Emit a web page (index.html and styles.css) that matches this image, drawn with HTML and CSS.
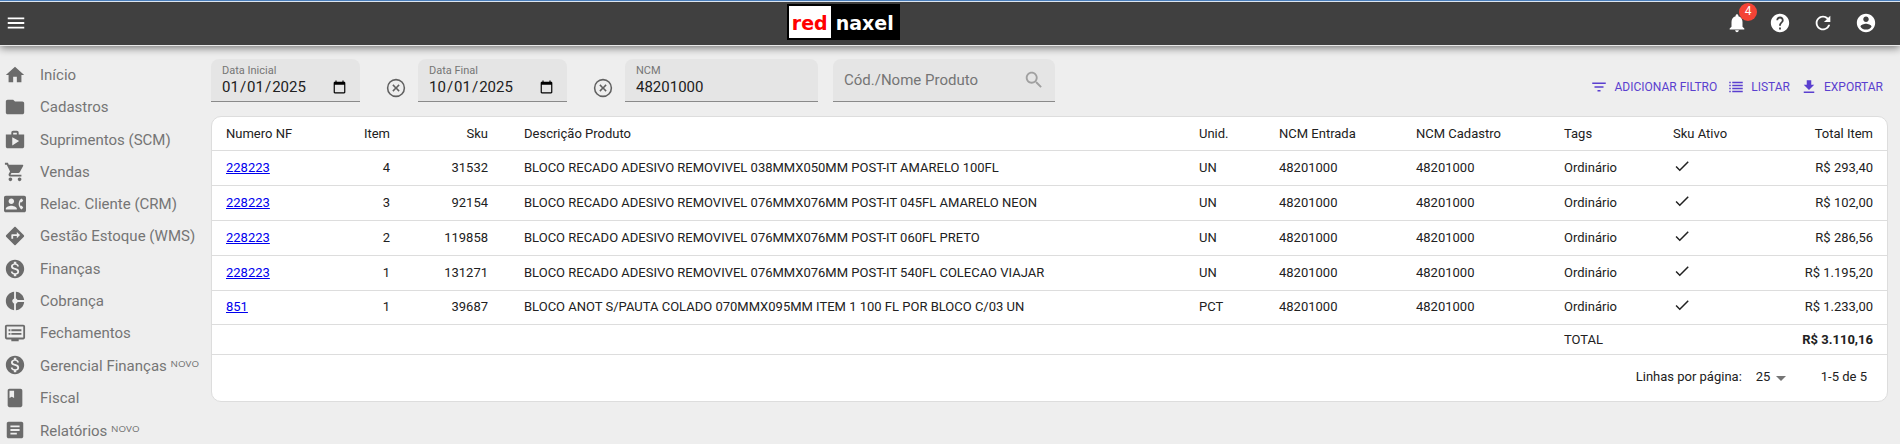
FILE: index.html
```html
<!DOCTYPE html>
<html lang="pt-BR">
<head>
<meta charset="utf-8">
<title>Rednaxel</title>
<link rel="stylesheet" href="styles.css">
</head>
<body>
<header class="topbar">
  <button class="icon-btn" aria-label="Menu"><svg viewBox="0 0 24 24"><path d="M3 18h18v-2H3v2zm0-5h18v-2H3v2zm0-7v2h18V6H3z"/></svg></button>
  <a class="logo" href="#"><span class="logo-red">red</span><span class="logo-naxel">naxel</span></a>
  <div class="top-actions">
    <button class="icon-btn" aria-label="Notificações"><svg viewBox="0 0 24 24"><path d="M12 22c1.100 0 2-.9 2-2h-4c0 1.100.89 2 2 2zm6-6v-5c0-3.070-1.640-5.640-4.500-6.320V4c0-.83-.67-1.500-1.500-1.500s-1.500.67-1.500 1.500v.68C7.630 5.360 6 7.920 6 11v5l-2 2v1h16v-1l-2-2z"/></svg><span class="badge">4</span></button>
    <button class="icon-btn" aria-label="Ajuda"><svg viewBox="0 0 24 24"><path d="M12 2C6.480 2 2 6.480 2 12s4.480 10 10 10 10-4.480 10-10S17.520 2 12 2zm1 17h-2v-2h2v2zm2.070-7.750l-.9.920C13.450 12.900 13 13.500 13 15h-2v-.5c0-1.100.45-2.100 1.170-2.830l1.240-1.260c.37-.36.59-.86.59-1.410 0-1.100-.9-2-2-2s-2 .9-2 2H8c0-2.210 1.790-4 4-4s4 1.790 4 4c0 .88-.36 1.680-.93 2.250z"/></svg></button>
    <button class="icon-btn" aria-label="Atualizar"><svg viewBox="0 0 24 24"><path d="M17.650 6.350C16.200 4.900 14.210 4 12 4c-4.420 0-7.990 3.580-7.990 8s3.570 8 7.990 8c3.730 0 6.840-2.550 7.730-6h-2.080c-.82 2.330-3.040 4-5.650 4-3.310 0-6-2.690-6-6s2.690-6 6-6c1.660 0 3.140.69 4.220 1.780L13 11h7V4l-2.350 2.350z"/></svg></button>
    <button class="icon-btn" aria-label="Conta"><svg viewBox="0 0 24 24"><path d="M12 2C6.480 2 2 6.480 2 12s4.480 10 10 10 10-4.480 10-10S17.520 2 12 2zm0 3c1.660 0 3 1.340 3 3s-1.340 3-3 3-3-1.340-3-3 1.340-3 3-3zm0 14.200c-2.500 0-4.710-1.280-6-3.220.03-1.990 4-3.080 6-3.080 1.990 0 5.970 1.090 6 3.080-1.290 1.940-3.500 3.220-6 3.220z"/></svg></button>
  </div>
</header>
<div class="layout">
  <nav class="sidebar">
    <a href="#"><svg viewBox="0 0 24 24"><path d="M10 20v-6h4v6h5v-8h3L12 3 2 12h3v8z"/></svg>Início</a>
    <a href="#"><svg viewBox="0 0 24 24"><path d="M10 4H4c-1.100 0-1.990.9-1.990 2L2 18c0 1.100.9 2 2 2h16c1.100 0 2-.9 2-2V8c0-1.100-.9-2-2-2h-8l-2-2z"/></svg>Cadastros</a>
    <a href="#"><svg viewBox="0 0 24 24"><path d="M16 6V4c0-1.110-.89-2-2-2h-4c-1.110 0-2 .89-2 2v2H2v13c0 1.110.89 2 2 2h16c1.110 0 2-.89 2-2V6h-6zm-6-2h4v2h-4V4zM9 18V9l7.500 4L9 18z"/></svg>Suprimentos (SCM)</a>
    <a href="#"><svg viewBox="0 0 24 24"><path d="M7 18c-1.100 0-1.990.9-1.990 2S5.900 22 7 22s2-.9 2-2-.9-2-2-2zM1 2v2h2l3.600 7.590-1.350 2.450c-.16.28-.25.61-.25.96 0 1.100.9 2 2 2h12v-2H7.420c-.14 0-.25-.11-.25-.25l.03-.12.9-1.630h7.450c.75 0 1.410-.41 1.750-1.030l3.580-6.490c.08-.14.12-.31.12-.48 0-.55-.45-1-1-1H5.210l-.94-2H1zm16 16c-1.100 0-1.990.9-1.990 2s.89 2 1.990 2 2-.9 2-2-.9-2-2-2z"/></svg>Vendas</a>
    <a href="#"><svg viewBox="0 0 24 24"><path d="M22 3H2C.9 3 0 3.900 0 5v14c0 1.100.9 2 2 2h20c1.100 0 1.990-.9 1.990-2L24 5c0-1.100-.9-2-2-2zM8 6c1.660 0 3 1.340 3 3s-1.340 3-3 3-3-1.340-3-3 1.340-3 3-3zm6 12H2v-1c0-2 4-3.100 6-3.100s6 1.100 6 3.100v1zm3.850-4h1.640L21 16l-1.990 1.990c-1.310-.98-2.280-2.380-2.730-3.990-.18-.64-.28-1.310-.28-2s.1-1.360.28-2c.45-1.620 1.420-3.010 2.730-3.990L21 8l-1.510 2h-1.640c-.22.63-.35 1.300-.35 2s.13 1.370.35 2z"/></svg>Relac. Cliente (CRM)</a>
    <a href="#"><svg viewBox="0 0 24 24"><path d="M21.710 11.290l-9-9c-.39-.39-1.020-.39-1.410 0l-9 9c-.39.39-.39 1.020 0 1.410l9 9c.39.39 1.020.39 1.410 0l9-9c.39-.38.39-1.010 0-1.410zM14 14.500V12h-4v3H8v-4c0-.55.45-1 1-1h5V7.500l3.500 3.500-3.500 3.500z"/></svg>Gestão Estoque (WMS)</a>
    <a href="#"><svg viewBox="0 0 24 24"><use href="#coin"/></svg>Finanças</a>
    <a href="#"><svg viewBox="0 0 24 24"><path d="M11 9.160V2c-5 .5-9 4.790-9 10s4 9.500 9 10v-7.160c-1-.41-2-1.520-2-2.840s1-2.430 2-2.840zM14.860 11H22c-.48-4.750-4-8.530-9-9v7.160c1 .3 1.520.98 1.860 1.840zM13 14.840V22c5-.47 8.520-4.250 9-9h-7.140c-.34.86-.86 1.540-1.860 1.840z"/></svg>Cobrança</a>
    <a href="#"><svg viewBox="0 0 24 24"><path d="M21 3H3c-1.100 0-2 .9-2 2v12c0 1.100.9 2 2 2h5v2h8v-2h5c1.100 0 1.990-.9 1.990-2L23 5c0-1.100-.9-2-2-2zm0 14H3V5h18v12zm-2-9H8v2h11V8zm0 4H8v2h11v-2zM7 8H5v2h2V8zm0 4H5v2h2v-2z"/></svg>Fechamentos</a>
    <a href="#"><svg viewBox="0 0 24 24"><path id="coin" d="M12 2C6.480 2 2 6.480 2 12s4.480 10 10 10 10-4.480 10-10S17.520 2 12 2zm1.410 16.090V20h-2.670v-1.930c-1.710-.36-3.160-1.460-3.270-3.400h1.960c.1 1.050.82 1.870 2.650 1.870 1.960 0 2.400-.98 2.400-1.590 0-.83-.44-1.610-2.670-2.140-2.480-.6-4.180-1.620-4.180-3.670 0-1.720 1.390-2.840 3.110-3.210V4h2.670v1.950c1.860.45 2.790 1.860 2.850 3.390H14.300c-.05-1.110-.64-1.870-2.220-1.870-1.500 0-2.400.68-2.400 1.640 0 .84.65 1.390 2.670 1.910s4.180 1.390 4.180 3.910c-.01 1.830-1.380 2.830-3.120 3.160z"/></svg>Gerencial Finanças ᴺᴼⱽᴼ</a>
    <a href="#"><svg viewBox="0 0 24 24"><path d="M18 2H6c-1.100 0-2 .9-2 2v16c0 1.100.9 2 2 2h12c1.100 0 2-.9 2-2V4c0-1.100-.9-2-2-2zM6 4h5v8l-2.500-1.500L6 12V4z"/></svg>Fiscal</a>
    <a href="#"><svg viewBox="0 0 24 24"><path d="M19 3H5c-1.100 0-2 .9-2 2v14c0 1.100.9 2 2 2h14c1.100 0 2-.9 2-2V5c0-1.100-.9-2-2-2zm-5 14H7v-2h7v2zm3-4H7v-2h10v2zm0-4H7V7h10v2z"/></svg>Relatórios ᴺᴼⱽᴼ</a>
  </nav>
  <main class="content">
    <div class="toolbar">
      <div class="field field-date"><label for="d1">Data Inicial</label><input id="d1" type="date" value="2025-01-01"></div>
      <button class="clear" aria-label="Limpar data inicial"><svg viewBox="0 0 24 24"><use href="#clear"/></svg></button>
      <div class="field field-date"><label for="d2">Data Final</label><input id="d2" type="date" value="2025-10-01"></div>
      <button class="clear" aria-label="Limpar data final"><svg viewBox="0 0 24 24"><path id="clear" d="M12 2a10 10 0 1 0 0 20 10 10 0 0 0 0-20zm0 18.300a8.300 8.300 0 1 1 0-16.600 8.300 8.300 0 0 1 0 16.600zM14.800 8 12 10.800 9.200 8 8 9.200l2.800 2.800L8 14.800 9.200 16l2.800-2.800 2.800 2.800 1.200-1.200-2.800-2.800L16 9.200z"/></svg></button>
      <div class="field field-ncm"><label for="ncm">NCM</label><input id="ncm" type="text" value="48201000"></div>
      <div class="field field-search"><input type="text" placeholder="Cód./Nome Produto" aria-label="Cód./Nome Produto"><svg viewBox="0 0 24 24"><path d="M15.500 14h-.79l-.28-.27C15.410 12.590 16 11.110 16 9.500 16 5.910 13.090 3 9.500 3S3 5.910 3 9.500 5.910 16 9.500 16c1.610 0 3.090-.59 4.230-1.570l.27.28v.79l5 4.990L20.490 19l-4.990-5zm-6 0C7.010 14 5 11.990 5 9.500S7.010 5 9.500 5 14 7.010 14 9.500 11.990 14 9.500 14z"/></svg></div>
      <div class="actions">
        <button><svg viewBox="0 0 24 24"><path d="M10 18h4v-2h-4v2zM3 6v2h18V6H3zm3 7h12v-2H6v2z"/></svg>ADICIONAR FILTRO</button>
        <button><svg viewBox="0 0 24 24"><path d="M3 7h2V5H3zm0 4h2V9H3zm0 4h2v-2H3zm0 4h2v-2H3zM7 7h14V5H7zm0 4h14V9H7zm0 4h14v-2H7zm0 4h14v-2H7z"/></svg>LISTAR</button>
        <button><svg viewBox="0 0 24 24"><path d="M19 9h-4V3H9v6H5l7 7 7-7zM5 18v2h14v-2H5z"/></svg>EXPORTAR</button>
      </div>
    </div>
    <section class="card">
      <table>
        <colgroup><col class="c-nf"><col class="c-item"><col class="c-sku"><col><col class="c-unid"><col class="c-ent"><col class="c-cad"><col class="c-tags"><col class="c-ativo"><col class="c-total"></colgroup>
        <thead><tr><th>Numero NF</th><th class="num">Item</th><th class="num">Sku</th><th class="desc">Descrição Produto</th><th>Unid.</th><th>NCM Entrada</th><th>NCM Cadastro</th><th>Tags</th><th>Sku Ativo</th><th class="num">Total Item</th></tr></thead>
        <tbody>
          <tr><td><a href="#">228223</a></td><td class="num">4</td><td class="num">31532</td><td class="desc">BLOCO RECADO ADESIVO REMOVIVEL 038MMX050MM POST-IT AMARELO 100FL</td><td>UN</td><td>48201000</td><td>48201000</td><td>Ordinário</td><td><svg class="check" viewBox="0 0 24 24"><use href="#check"/></svg></td><td class="num">R$ 293,40</td></tr>
          <tr><td><a href="#">228223</a></td><td class="num">3</td><td class="num">92154</td><td class="desc">BLOCO RECADO ADESIVO REMOVIVEL 076MMX076MM POST-IT 045FL AMARELO NEON</td><td>UN</td><td>48201000</td><td>48201000</td><td>Ordinário</td><td><svg class="check" viewBox="0 0 24 24"><use href="#check"/></svg></td><td class="num">R$ 102,00</td></tr>
          <tr><td><a href="#">228223</a></td><td class="num">2</td><td class="num">119858</td><td class="desc">BLOCO RECADO ADESIVO REMOVIVEL 076MMX076MM POST-IT 060FL PRETO</td><td>UN</td><td>48201000</td><td>48201000</td><td>Ordinário</td><td><svg class="check" viewBox="0 0 24 24"><use href="#check"/></svg></td><td class="num">R$ 286,56</td></tr>
          <tr><td><a href="#">228223</a></td><td class="num">1</td><td class="num">131271</td><td class="desc">BLOCO RECADO ADESIVO REMOVIVEL 076MMX076MM POST-IT 540FL COLECAO VIAJAR</td><td>UN</td><td>48201000</td><td>48201000</td><td>Ordinário</td><td><svg class="check" viewBox="0 0 24 24"><use href="#check"/></svg></td><td class="num">R$ 1.195,20</td></tr>
          <tr class="last"><td><a href="#">851</a></td><td class="num">1</td><td class="num">39687</td><td class="desc">BLOCO ANOT S/PAUTA COLADO 070MMX095MM ITEM 1 100 FL POR BLOCO C/03 UN</td><td>PCT</td><td>48201000</td><td>48201000</td><td>Ordinário</td><td><svg class="check" viewBox="0 0 24 24"><path id="check" d="M9 16.170L4.830 12l-1.420 1.410L9 19 21 7l-1.410-1.410z"/></svg></td><td class="num">R$ 1.233,00</td></tr>
        </tbody>
        <tfoot><tr><td colspan="7"></td><td>TOTAL</td><td></td><td class="num"><b>R$ 3.110,16</b></td></tr></tfoot>
      </table>
      <div class="pager">
        <label for="rows">Linhas por página:</label>
        <span class="rows"><select id="rows"><option>25</option></select></span>
        <span class="range">1-5 de 5</span>
      </div>
    </section>
  </main>
</div>
</body>
</html>
```
FILE: styles.css
```css
* { box-sizing: border-box; }
body { margin: 0; min-height: 100vh; overflow: hidden; background: #eee; color: #212121; font-family: Roboto, "Noto Sans", sans-serif; font-size: 13px; }
button { border: 0; padding: 0; background: none; font: inherit; color: inherit; cursor: pointer; }
svg { display: block; fill: currentColor; flex: none; }

.topbar { position: relative; display: grid; grid-template-columns: 4fr auto 5fr; align-items: center; height: 46px; padding: 0 23px 0 5px; background: #404040; border-top: 1px solid #4a7ebb; border-bottom: 1px solid #e8e8e8; box-shadow: inset 0 1px #dbe5f1, 0 2px 8px rgba(0, 0, 0, .5); color: #fff; }
.icon-btn { position: relative; justify-self: start; }
.icon-btn svg { width: 22px; height: 22px; }
.logo { display: flex; height: 36px; margin-bottom: 2px; padding: 2px; background: #000; font: 700 19px/34px "DejaVu Sans", sans-serif; text-decoration: none; }
.logo-red { padding: 0 3px; background: #fff; color: #f00; }
.logo-naxel { padding: 0 4px 0 5px; color: #fff; }
.top-actions { display: flex; justify-content: flex-end; gap: 21px; }
.badge { position: absolute; top: -9px; left: 13px; width: 18px; height: 18px; border-radius: 50%; background: #f44336; font-size: 12px; line-height: 16px; text-align: center; }

.layout { display: grid; grid-template-columns: 211px 1fr; }
.sidebar { display: grid; grid-auto-rows: 1fr; height: calc(100vh - 57px); margin-top: 13px; }
.sidebar a { display: flex; align-items: center; gap: 14px; padding-left: 4px; color: #757575; font-size: 15px; text-decoration: none; white-space: pre; }
.sidebar svg { width: 22px; height: 22px; color: #6b6b6b; }

.content { padding: 13px 12px 0 0; min-width: 0; }
.toolbar { display: flex; align-items: stretch; height: 43px; }
.field { position: relative; display: flex; flex-direction: column; padding: 6px 11px 0; background: #e5e5e5; border-bottom: 1px solid #8a8a8a; border-radius: 8px 8px 0 0; }
.field label { color: #757575; font-size: 11px; line-height: 11px; }
.field input { width: 100%; min-width: 0; height: 22px; padding: 0; border: 0; outline: 0; background: none; color: #212121; font: 15px/22px Roboto, sans-serif; }
.field input::-webkit-datetime-edit { padding: 0; }
.field input::-webkit-datetime-edit-month-field { padding-left: 0; }
.field-date { width: 149px; }
.field-ncm { width: 193px; }
.field-search { flex-direction: row; align-items: center; width: 222px; margin-left: 15px; padding: 0 10px 0 11px; }
.field-search input::placeholder { color: #757575; opacity: 1; }
.field-search svg { width: 22px; height: 22px; color: #a0a0a0; }
.clear { display: flex; align-items: center; justify-content: flex-end; width: 58px; padding: 14px 11px 0 0; color: #616161; }
.clear svg { width: 22px; height: 22px; }
.actions { display: flex; gap: 10px; margin-left: auto; padding: 13px 5px 0 0; }
.actions button { display: flex; align-items: center; gap: 6px; color: #5a3fcf; font-size: 12px; }
.actions svg { width: 18px; height: 18px; }

.card { margin-top: 14px; background: #fff; border: 1px solid #ddd; border-radius: 10px; }
table { width: 100%; table-layout: fixed; border-collapse: collapse; }
.c-nf { width: 122px; }
.c-item { width: 70px; }
.c-sku { width: 98px; }
.c-unid { width: 80px; }
.c-ent { width: 137px; }
.c-cad { width: 148px; }
.c-tags { width: 109px; }
.c-ativo { width: 109px; }
.c-total { width: 119px; }
th, td { height: 35px; padding: 0 14px; border-bottom: 1px solid #ddd; font-weight: 400; text-align: left; white-space: nowrap; }
tbody td { padding-bottom: 1px; }
th { height: 33px; }
.last td { height: 34px; }
tfoot td { height: 30px; }
.num { text-align: right; }
.desc { padding-left: 22px; }
td a { color: #00e; }
.check { width: 18px; height: 18px; margin-bottom: 3px; }
.pager { display: flex; align-items: center; justify-content: flex-end; height: 46px; padding: 0 20px 2px 0; }
.rows { position: relative; margin: 0 35px 0 14px; }
.rows::after { content: ""; position: absolute; right: 0; top: 7px; border: 5px solid transparent; border-top-color: #757575; border-bottom: 0; pointer-events: none; }
.rows select { width: 30px; padding: 0; border: 0; appearance: none; background: none; color: inherit; font: inherit; }
```
